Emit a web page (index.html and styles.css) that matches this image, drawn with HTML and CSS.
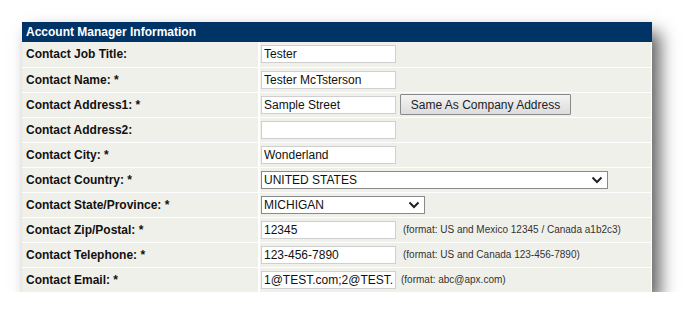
FILE: index.html
```html
<!DOCTYPE html>
<html lang="en">
<head>
    <meta charset="UTF-8">
    <title>Account Manager Information</title>
    <link rel="stylesheet" href="styles.css">
</head>
<body>

<div class="panel">
    <table class="form-table">
        <tr>
            <th colspan="2">Account Manager Information</th>
        </tr>
        <tr>
            <td class="label">Contact Job Title:</td>
            <td class="field"><input type="text" value="Tester"></td>
        </tr>
        <tr>
            <td class="label">Contact Name: *</td>
            <td class="field"><input type="text" value="Tester McTsterson"></td>
        </tr>
        <tr>
            <td class="label">Contact Address1: *</td>
            <td class="field"><input type="text" value="Sample Street"><button type="button">Same As Company Address</button></td>
        </tr>
        <tr>
            <td class="label">Contact Address2:</td>
            <td class="field"><input type="text" value=""></td>
        </tr>
        <tr>
            <td class="label">Contact City: *</td>
            <td class="field"><input type="text" value="Wonderland"></td>
        </tr>
        <tr>
            <td class="label">Contact Country: *</td>
            <td class="field">
                <span class="select country">
                    <select><option>UNITED STATES</option></select>
                    <svg class="chevron" width="12" height="8" viewBox="0 0 12 8"><path d="M1.5 1.5 L6 6 L10.5 1.5" fill="none" stroke="#222" stroke-width="2"/></svg>
                </span>
            </td>
        </tr>
        <tr>
            <td class="label">Contact State/Province: *</td>
            <td class="field">
                <span class="select state">
                    <select><option>MICHIGAN</option></select>
                    <svg class="chevron" width="12" height="8" viewBox="0 0 12 8"><path d="M1.5 1.5 L6 6 L10.5 1.5" fill="none" stroke="#222" stroke-width="2"/></svg>
                </span>
            </td>
        </tr>
        <tr>
            <td class="label">Contact Zip/Postal: *</td>
            <td class="field"><input type="text" value="12345"><span class="hint">(format: US and Mexico 12345 / Canada a1b2c3)</span></td>
        </tr>
        <tr>
            <td class="label">Contact Telephone: *</td>
            <td class="field"><input type="text" value="123-456-7890"><span class="hint">(format: US and Canada 123-456-7890)</span></td>
        </tr>
        <tr>
            <td class="label">Contact Email: *</td>
            <td class="field"><input type="text" value="1@TEST.com;2@TEST.com"><span class="hint email">(format: abc@apx.com)</span></td>
        </tr>
    </table>
</div>

</body>
</html>
```

FILE: styles.css
```css
body {
    margin: 0;
    padding: 0;
    background: #fff;
    font-family: "Liberation Sans", Arial, sans-serif;
    color: #111;
}
.panel {
    margin: 22px 0 0 22px;
    width: 630px;
    box-shadow: 8px 10px 16px rgba(0, 0, 0, 0.62);
}
.form-table {
    width: 630px;
    border-collapse: collapse;
    background: #f0f0eb;
}
.form-table th {
    background: #003366;
    color: #fff;
    font-size: 12px;
    font-weight: bold;
    text-align: left;
    height: 20px;
    padding: 0 4px;
    box-sizing: border-box;
}
.form-table td {
    height: 25px;
    padding: 0;
    box-sizing: border-box;
    border-top: 1px solid #fff;
    font-size: 12px;
}
.form-table tr:nth-child(2) td {
    border-top: none;
}
.label {
    width: 237px;
    padding-left: 4px !important;
    font-weight: bold;
    border-right: 2px solid #fff;
}
.field {
    padding-left: 1px !important;
    border-right: 1px solid #fff;
    white-space: nowrap;
}
.field input {
    width: 135px;
    height: 18px;
    box-sizing: border-box;
    border: 1px solid #cfcfcf;
    background: #fff;
    font-family: "Liberation Sans", Arial, sans-serif;
    font-size: 12px;
    color: #111;
    padding: 0 2px;
    margin: 0;
    vertical-align: middle;
}
.field button {
    margin: 0 0 0 4px;
    width: 171px;
    height: 21px;
    border: 1px solid #8a8a8a;
    border-radius: 1px;
    background: linear-gradient(#f4f4f4, #dcdcdc);
    font-family: "Liberation Sans", Arial, sans-serif;
    font-size: 12px;
    color: #222;
    padding: 0;
    vertical-align: middle;
}
.select {
    position: relative;
    display: inline-block;
    vertical-align: middle;
}
.select select {
    -webkit-appearance: none;
    appearance: none;
    height: 18px;
    box-sizing: border-box;
    border: 1px solid #8a8a8a;
    border-radius: 0;
    background: #fff;
    font-family: "Liberation Sans", Arial, sans-serif;
    font-size: 12px;
    color: #111;
    padding: 0 2px;
    margin: 0;
    display: block;
}
.country select {
    width: 347px;
}
.state select {
    width: 164px;
}
.chevron {
    position: absolute;
    right: 5px;
    top: 5px;
}
.hint {
    font-size: 10px;
    color: #333;
    margin-left: 7px;
    vertical-align: middle;
}
.hint.email {
    margin-left: 5px;
}
```
